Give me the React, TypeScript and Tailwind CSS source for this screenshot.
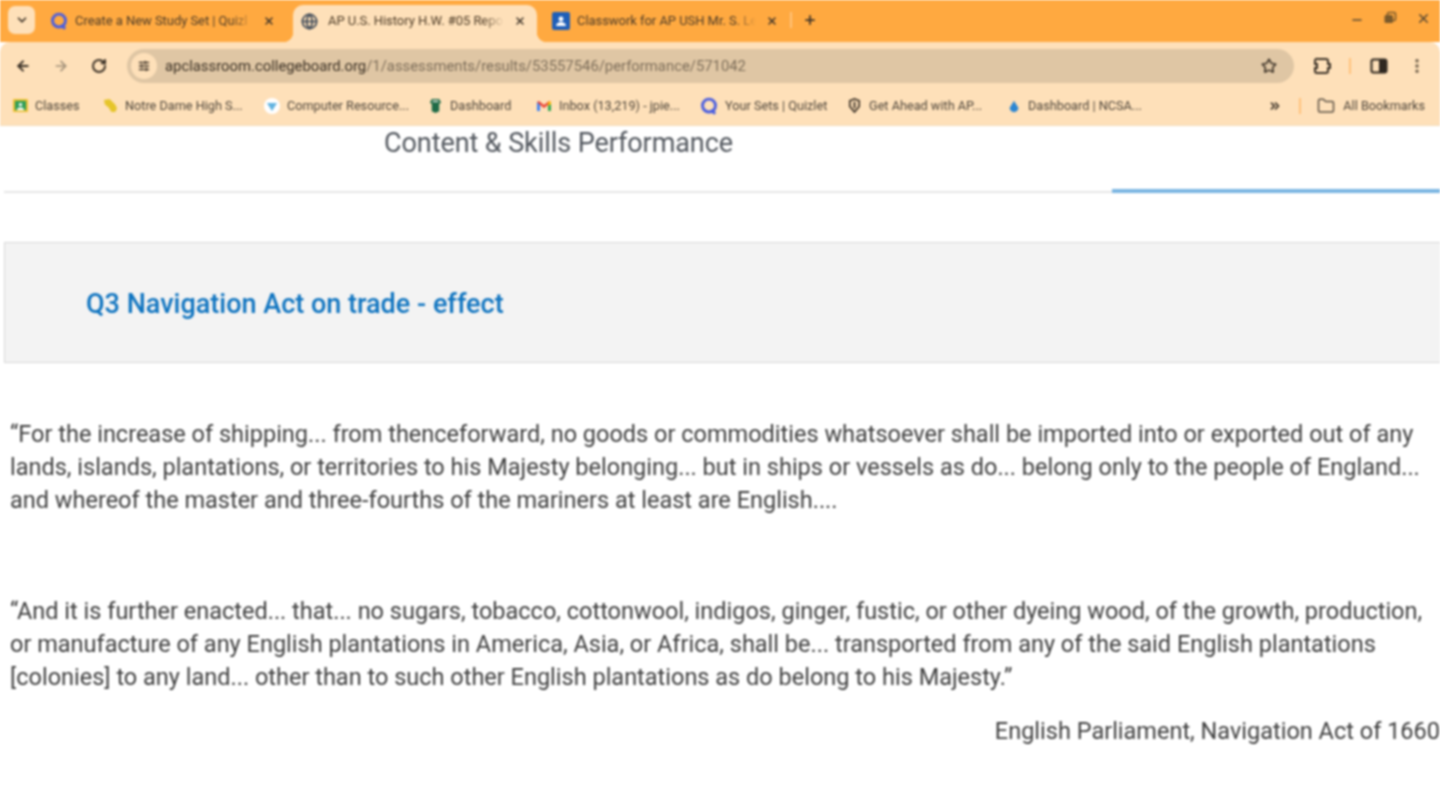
import React from "react";
import { ArrowLeft, ArrowRight, RotateCw, Star, X, Plus, ChevronDown, Minus, EllipsisVertical, Folder, ChevronsRight, SlidersHorizontal, Globe } from "lucide-react";

function QuizletIcon() {
  return (
    <svg viewBox="0 0 20 20" className="w-[18px] h-[18px] shrink-0">
      <circle cx="10" cy="9.500" r="7.200" fill="none" stroke="#4a5ee0" strokeWidth="3.200" />
      <path d="M12 15l5 3.500" stroke="#4a5ee0" strokeWidth="3.200" />
    </svg>
  );
}

function ClassroomIcon() {
  return (
    <svg viewBox="0 0 18 18" className="w-[18px] h-[18px] shrink-0">
      <rect width="18" height="18" rx="2" fill="#1f5fb8" />
      <circle cx="9" cy="7" r="2.400" fill="#fff" />
      <path d="M4 14c.5-3 2.500-4 5-4s4.500 1 5 4z" fill="#fff" />
    </svg>
  );
}

function Tab({ icon, title, active, w, closeMargin }: { icon: React.ReactNode; title: string; active?: boolean; w: string; closeMargin: string }) {
  return (
    <div className={`${w} relative h-[37px] mt-[5px] pb-[5px] flex items-center rounded-t-[10px] ${active ? "bg-[#fee0b9]" : ""}`}>
      {active && (
        <>
          <span className="absolute bottom-0 -left-[10px] w-[10px] h-[10px] bg-[radial-gradient(circle_at_0_0,transparent_10px,#fee0b9_10.500px)]" />
          <span className="absolute bottom-0 -right-[10px] w-[10px] h-[10px] bg-[radial-gradient(circle_at_100%_0,transparent_10px,#fee0b9_10.500px)]" />
        </>
      )}
      {icon}
      <span className="flex-1 min-w-0 overflow-hidden whitespace-nowrap text-[13px] tracking-[-0.05px] text-[#4f3d28] [mask-image:linear-gradient(to_right,black_88%,transparent)]">{title}</span>
      <X size={12} strokeWidth={3} className={`text-[#3d3328] shrink-0 ml-[10px] ${closeMargin}`} />
    </div>
  );
}

function Bookmark({ icon, label, w }: { icon: React.ReactNode; label: string; w: string }) {
  return (
    <div className={`${w} flex items-center gap-[7px] shrink-0`}>
      {icon}
      <span className="text-[12.700px] text-[#4f463b] whitespace-nowrap">{label}</span>
    </div>
  );
}

export default function App() {
  return (
    <div className="w-[1440px] h-[809px] overflow-hidden bg-white blur-[0.9px] font-['Roboto',sans-serif]">
      {/* Tab strip */}
      <div className="h-[42px] bg-[#ffa940] flex items-start pl-[8px]">
        <div className="w-[27px] h-[28px] mt-[6px] rounded-[7px] bg-[#fee0b9] flex items-center justify-center shrink-0">
          <ChevronDown size={14} strokeWidth={3} className="text-[#3d3328]" />
        </div>
        <div className="ml-[15px] flex">
          <Tab w="w-[243px]" closeMargin="mr-[18px]" title="Create a New Study Set | Quizl" icon={<span className="mr-[7px] flex"><QuizletIcon /></span>} />
          <Tab w="w-[244px]" closeMargin="mr-[11px]" active title="AP U.S. History H.W. #05 Repo" icon={<Globe size={17} strokeWidth={2.400} className="text-[#3f4a58] shrink-0 ml-[8px] mr-[10px]" />} />
          <div className="w-[3px]" />
          <Tab w="w-[250px]" closeMargin="mr-[12px]" title="Classwork for AP USH Mr. S. Le" icon={<span className="ml-[12px] mr-[7px] flex"><ClassroomIcon /></span>} />
        </div>
        <div className="w-[2px] h-[16px] mt-[12px] bg-[#ffc27a]" />
        <Plus size={14} strokeWidth={3} className="text-[#3d3328] mt-[13px] ml-[11px]" />
        <div className="ml-auto flex items-center gap-[19px] pr-[9px] pt-[9px] text-[#5a4a33]">
          <Minus size={14} strokeWidth={2.500} className="mt-[4px]" />
          <svg viewBox="0 0 14 14" className="w-[14px] h-[14px]">
            <rect x="1.500" y="4" width="8.500" height="8" rx="1.500" fill="#7a5a2c" />
            <rect x="4.500" y="1.500" width="8" height="8" rx="1.500" fill="none" stroke="#7a5a2c" strokeWidth="1.600" />
          </svg>
          <X size={15} strokeWidth={2.500} />
        </div>
      </div>

      {/* Toolbar */}
      <div className="h-[84px] bg-[#fee0b9] rounded-t-[10px] border-b border-[#f3dcbc]">
        <div className="h-[44px] flex items-center pl-[15px] pt-[3px]">
          <ArrowLeft size={16} strokeWidth={3} className="text-[#3d3328]" />
          <ArrowRight size={16} strokeWidth={2.500} className="ml-[22px] text-[#a08f78]" />
          <RotateCw size={16} strokeWidth={3} className="ml-[22px] text-[#3d3328]" />
          <div className="ml-[20px] w-[1167px] h-[34px] rounded-full bg-[#dfc6a4] flex items-center pl-[4px] pr-[17px]">
            <div className="w-[26px] h-[26px] rounded-full bg-[#fee0b9] flex items-center justify-center">
              <SlidersHorizontal size={12} strokeWidth={3} className="text-[#3d3328]" />
            </div>
            <span className="ml-[8px] pt-[2px] text-[14.850px] text-[#3a3024]">apclassroom.collegeboard.org</span>
            <span className="pt-[2px] text-[14.850px] text-[#7d6e5a]">/1/assessments/results/53557546/performance/571042</span>
            <Star size={16} strokeWidth={2.400} className="ml-auto text-[#3d3328]" />
          </div>
          <svg viewBox="0 0 20 20" className="ml-[18px] w-[20px] h-[20px]">
            <path d="M6 3h8a2 2 0 0 1 2 2v3h2v4h-2v3a2 2 0 0 1-2 2H5a2 2 0 0 1-2-2v-3h2V8H3V5a2 2 0 0 1 3-2z" fill="none" stroke="#3d3328" strokeWidth="2" />
          </svg>
          <div className="ml-[17px] w-[2px] h-[16px] bg-[#ffc27a]" />
          <svg viewBox="0 0 18 18" className="ml-[19px] w-[18px] h-[18px]">
            <rect x="1.500" y="2.500" width="15" height="13" rx="2" fill="#fee0b9" stroke="#2f2820" strokeWidth="2" />
            <rect x="9" y="3" width="7" height="12" fill="#2f2820" />
          </svg>
          <EllipsisVertical size={18} strokeWidth={2.500} className="ml-[20px] text-[#6b5c48]" />
        </div>
        <div className="h-[40px] flex items-center pl-[13px] pr-[15px]">
          <Bookmark w="w-[90px]" label="Classes" icon={
            <svg viewBox="0 0 16 16" className="w-[15px] h-[15px] shrink-0">
              <rect width="16" height="14" y="1" rx="1" fill="#f2c12e" />
              <rect x="2" y="3" width="12" height="10" fill="#2f9e57" />
              <circle cx="8" cy="7" r="1.800" fill="#fff" />
              <path d="M4 13c.5-2.500 2-3 4-3s3.500.5 4 3z" fill="#fff" />
            </svg>} />
          <Bookmark w="w-[161px]" label="Notre Dame High S..." icon={
            <svg viewBox="0 0 16 16" className="w-[15px] h-[15px] shrink-0">
              <path d="M1 2l6-1 6 6 2 4-2 4-4 0-3-5-4-3z" fill="#e6c52a" />
            </svg>} />
          <Bookmark w="w-[164px]" label="Computer Resource..." icon={
            <svg viewBox="0 0 16 16" className="w-[16px] h-[16px] shrink-0">
              <circle cx="8" cy="8" r="8" fill="#fff" />
              <path d="M3 5h10l-5 8z" fill="#62b3e0" />
            </svg>} />
          <Bookmark w="w-[108px]" label="Dashboard" icon={
            <svg viewBox="0 0 16 16" className="w-[15px] h-[15px] shrink-0">
              <path d="M4 1h8l2 4-2 1v8l-4 2-4-2V6L2 5z" fill="#1f6b47" />
              <rect x="5" y="2.500" width="6" height="2" fill="#c8d6c8" />
            </svg>} />
          <Bookmark w="w-[164px]" label="Inbox (13,219) - jpie..." icon={
            <svg viewBox="0 0 16 16" className="w-[16px] h-[16px] shrink-0">
              <path d="M1 4v9h3V7l4 3 4-3v6h3V4l-2-1-5 4-5-4z" fill="#ea4335" />
              <path d="M1 4v9h3V7z" fill="#4285f4" />
              <path d="M12 7v6h3V4z" fill="#34a853" />
              <path d="M13 3l2 1v2l-3 2V5z" fill="#fbbc04" />
            </svg>} />
          <Bookmark w="w-[147px]" label="Your Sets | Quizlet" icon={<QuizletIcon />} />
          <Bookmark w="w-[160px]" label="Get Ahead with AP..." icon={
            <svg viewBox="0 0 16 16" className="w-[15px] h-[15px] shrink-0">
              <path d="M3 3l5-2 5 2v6l-5 6-5-6z" fill="none" stroke="#3d3328" strokeWidth="1.800" />
              <path d="M8 4v7" stroke="#3d3328" strokeWidth="2" />
            </svg>} />
          <Bookmark w="w-[140px]" label="Dashboard | NCSA..." icon={
            <svg viewBox="0 0 16 16" className="w-[14px] h-[14px] shrink-0">
              <path d="M8 2l5 8a5 5 0 1 1-10 0z" fill="#2b86d3" />
            </svg>} />
          <ChevronsRight size={14} strokeWidth={3} className="ml-auto text-[#3d3328]" />
          <div className="ml-[17px] w-[2px] h-[16px] bg-[#ffc27a]" />
          <Folder size={18} strokeWidth={2} className="ml-[16px] text-[#5b5145]" />
          <span className="ml-[8px] text-[12.700px] text-[#4f463b]">All Bookmarks</span>
        </div>
      </div>

      {/* Page */}
      <div className="h-[63px] pl-[384px] pt-[1px]">
        <div className="text-[27px] leading-[32px] text-[#53585f] tracking-[-0.08px]">Content &amp; Skills Performance</div>
      </div>
      <div className="ml-[4px] flex items-end h-[4px]">
        <div className="flex-1 h-[2px] bg-[#e6e6e6]" />
        <div className="w-[328px] h-[4px] bg-[#7ab5e2]" />
      </div>

      <div className="mt-[49px] ml-[4px] h-[121px] bg-[#f3f3f3] border border-[#d8d8d8] border-r-0 flex items-center pl-[81px] pt-[3px]">
        <div className="text-[27px] font-medium text-[#0f74c0]">Q3 Navigation Act on trade - effect</div>
      </div>

      <div className="mt-[55px] ml-[10px] text-[23.500px] leading-[33px] text-[#3f3f3f] whitespace-nowrap">
        <p>“For the increase of shipping... from thenceforward, no goods or commodities whatsoever shall be imported into or exported out of any</p>
        <p>lands, islands, plantations, or territories to his Majesty belonging... but in ships or vessels as do... belong only to the people of England...</p>
        <p>and whereof the master and three-fourths of the mariners at least are English....</p>
        <p className="mt-[78px]">“And it is further enacted... that... no sugars, tobacco, cottonwool, indigos, ginger, fustic, or other dyeing wood, of the growth, production,</p>
        <p>or manufacture of any English plantations in America, Asia, or Africa, shall be... transported from any of the said English plantations</p>
        <p>[colonies] to any land... other than to such other English plantations as do belong to his Majesty.”</p>
        <p className="mt-[21px] text-right">English Parliament, Navigation Act of 1660</p>
      </div>
    </div>
  );
}
